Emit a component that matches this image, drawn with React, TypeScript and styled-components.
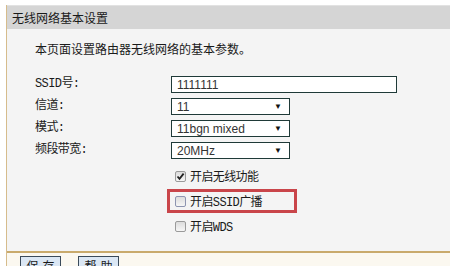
import styled, { createGlobalStyle, css } from "styled-components";

const GlobalStyle = createGlobalStyle`
  html, body {
    margin: 0;
    padding: 0;
    background: #ffffff;
    overflow: hidden;
  }
  body {
    font-family: "Noto Sans CJK SC", "Liberation Sans", sans-serif;
    font-size: 12px;
    color: #222;
  }
`;

const Page = styled.div`
  width: 450px;
  height: 266px;
  padding: 5px 0 0 6px;
  box-sizing: border-box;
  overflow: hidden;
`;

const Panel = styled.div`
  border-left: 1px solid #d6bc8c;
`;

const TitleBar = styled.div`
  height: 24px;
  background: #d5d5d5;
  border-top: 1px solid #e2e2e2;
  box-sizing: border-box;
  padding-left: 5px;
  display: flex;
  align-items: center;
  font-size: 12px;
  color: #1a1a1a;
`;

const Body = styled.div`
  height: 224px;
  box-sizing: border-box;
  background: #f4f4f4;
  border-bottom: 2px solid #c9aa6c;
  padding: 12px 0 0 28px;
`;

const Intro = styled.div`
  line-height: 16px;
  color: #1a1a1a;
`;

const Form = styled.div`
  margin-top: 19px;
  display: grid;
  grid-template-columns: 136px auto;
  grid-auto-rows: 17px;
  row-gap: 5px;
  align-items: center;
`;

const Label = styled.div`
  font-family: "Liberation Mono", "Noto Sans CJK SC", monospace;
  font-size: 12px;
  letter-spacing: -0.6px;
  color: #1a1a1a;
  line-height: 17px;
`;

const Field = styled.div<{ $width: number }>`
  width: ${(p) => p.$width}px;
  height: 17px;
  box-sizing: border-box;
  border: 1px solid #1f3a38;
  background: #ffffff;
  display: flex;
  align-items: center;
  justify-content: space-between;
  padding: 0 7px 0 5px;
  font-family: "Liberation Sans", Arial, sans-serif;
  font-size: 12px;
  color: #333;
`;

const Arrow = styled.span`
  font-size: 8px;
  color: #111;
`;

const Checks = styled.div`
  margin: 5px 0 0 132px;
  display: flex;
  flex-direction: column;
  gap: 1px;
`;

const CheckRow = styled.div<{ $marked?: boolean }>`
  width: 130px;
  height: 24px;
  box-sizing: border-box;
  border: 3px solid transparent;
  padding-left: 5px;
  display: flex;
  align-items: center;
  gap: 4px;
  color: #1a1a1a;
  ${(p) =>
    p.$marked &&
    css`
      border-color: #c9454a;
    `}
`;

const Box = styled.span<{ $focus?: boolean }>`
  width: 11px;
  height: 11px;
  box-sizing: border-box;
  border: 1px solid ${(p) => (p.$focus ? "#8d94b0" : "#9a9a9a")};
  border-radius: 2px;
  background: linear-gradient(#dcdcdc, #f6f6f6);
  display: flex;
  align-items: center;
  justify-content: center;
`;

const CheckText = styled.span`
  font-family: "Liberation Mono", "Noto Sans CJK SC", monospace;
  font-size: 12px;
  letter-spacing: -0.6px;
`;

const Footer = styled.div`
  background: #fbf8f0;
  height: 20px;
  padding: 3px 0 0 13px;
  display: flex;
  gap: 17px;
`;

const Button = styled.div`
  width: 41px;
  height: 18px;
  box-sizing: border-box;
  border: 1px solid #3a4a5a;
  background: #dbe7f4;
  display: flex;
  align-items: center;
  justify-content: center;
  white-space: nowrap;
  letter-spacing: 4px;
  padding-left: 4px;
  color: #1a1a1a;
`;

function Check({ checked, focus }: { checked?: boolean; focus?: boolean }) {
  return (
    <Box $focus={focus}>
      {checked && (
        <svg width="9" height="9" viewBox="0 0 9 9">
          <path d="M1.5 4.5 L3.5 6.8 L7.6 1.6" fill="none" stroke="#222" strokeWidth="1.8" />
        </svg>
      )}
    </Box>
  );
}

export default function App() {
  return (
    <Page>
      <GlobalStyle />
      <Panel>
        <TitleBar>无线网络基本设置</TitleBar>
        <Body>
          <Intro>本页面设置路由器无线网络的基本参数。</Intro>
          <Form>
            <Label>SSID号:</Label>
            <Field $width={226}>1111111</Field>
            <Label>信道:</Label>
            <Field $width={119}>
              11<Arrow>▼</Arrow>
            </Field>
            <Label>模式:</Label>
            <Field $width={119}>
              11bgn mixed<Arrow>▼</Arrow>
            </Field>
            <Label>频段带宽:</Label>
            <Field $width={119}>
              20MHz<Arrow>▼</Arrow>
            </Field>
          </Form>
          <Checks>
            <CheckRow>
              <Check checked />
              <CheckText>开启无线功能</CheckText>
            </CheckRow>
            <CheckRow $marked>
              <Check focus />
              <CheckText>开启SSID广播</CheckText>
            </CheckRow>
            <CheckRow>
              <Check />
              <CheckText>开启WDS</CheckText>
            </CheckRow>
          </Checks>
        </Body>
        <Footer>
          <Button>保存</Button>
          <Button>帮助</Button>
        </Footer>
      </Panel>
    </Page>
  );
}
